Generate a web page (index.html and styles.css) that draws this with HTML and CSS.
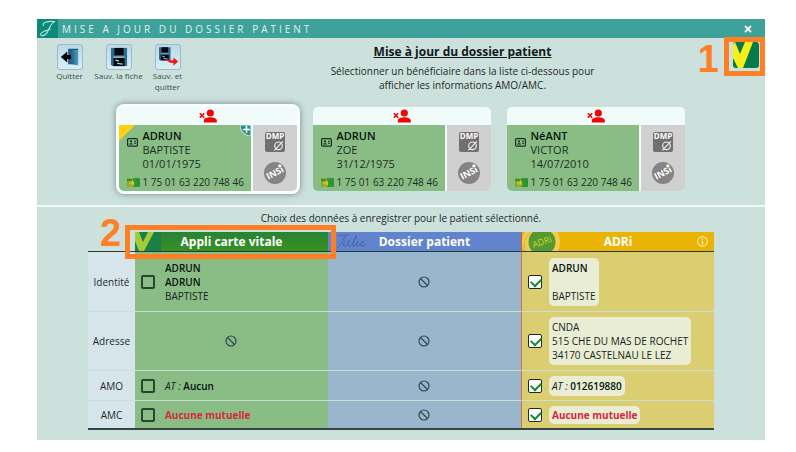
FILE: index.html
```html
<!DOCTYPE html>
<html lang="fr">
<head>
<meta charset="utf-8">
<meta name="viewport" content="width=device-width, initial-scale=1">
<title>Mise à jour du dossier patient</title>
<link rel="stylesheet" href="styles.css">
</head>
<body>
<svg class="defs" aria-hidden="true">
  <defs>
    <linearGradient id="door" x1="0" y1="0" x2="1" y2="0"><stop offset="0" stop-color="#1d5f80"/><stop offset="1" stop-color="#4f9fc4"/></linearGradient>
    <linearGradient id="vitale" x1="0" y1="0" x2="1" y2="0"><stop offset="0" stop-color="#6fa82c"/><stop offset=".45" stop-color="#a9b52a"/><stop offset=".5" stop-color="#2f9c34"/><stop offset="1" stop-color="#2c8f38"/></linearGradient>
    <symbol id="i-remove" viewBox="0 0 18 14">
      <circle cx="11.300" cy="4" r="3.600"/><path d="M4.800 13.500v-2c0-2.200 3.600-3.200 6.500-3.200s6.500 1 6.500 3.200v2z"/>
      <path d="M.8 4.200l4.400 4.600M5.200 4.200L.8 8.800" stroke="#f00505" stroke-width="1.600" fill="none"/>
    </symbol>
    <symbol id="i-id" viewBox="0 0 11 9">
      <rect x=".6" y=".6" width="9.800" height="7.600" rx="1" fill="none" stroke="#16301f" stroke-width="1.200"/>
      <circle cx="4" cy="3.400" r="1.100"/><path d="M2 6.600c0-1.800 4-1.800 4 0zM7 2.700h2v1H7zM7 4.800h2v1H7z"/>
    </symbol>
    <symbol id="i-card" viewBox="0 0 13 9">
      <rect width="13" height="9" rx="1" fill="url(#vitale)"/>
      <path d="M0 1h6v2H0z" fill="#3f8e2d"/><path d="M2 4h3v2.500H2z" fill="#c9b52e"/><path d="M5.500 1l1.500 4v3l-2-3z" fill="#e5c936"/>
    </symbol>
    <symbol id="i-dmp" viewBox="0 0 20 20">
      <rect width="20" height="20" rx="2" fill="#716f70"/>
      <text x="10" y="7" class="dmp-text">DMP</text>
      <circle cx="13.500" cy="13.800" r="3.800" fill="none" stroke="#eee" stroke-width="1.200"/><path d="M9.300 18.300l8.600-9" stroke="#eee" stroke-width="1.200"/>
    </symbol>
    <symbol id="i-insi" viewBox="0 0 22 22">
      <circle cx="11" cy="11" r="11" fill="#858484"/>
      <text x="11" y="14" transform="rotate(-27 11 11)" class="insi-text">INSi</text>
      <circle cx="15.800" cy="3.800" r="1.500" fill="#fff"/>
    </symbol>
    <symbol id="i-none" viewBox="0 0 12 12">
      <circle cx="6" cy="6" r="5" fill="none" stroke="currentColor" stroke-width="1.200"/><path d="M2.500 2.500l7 7" stroke="currentColor" stroke-width="1.200"/>
    </symbol>
    <symbol id="i-floppy" viewBox="0 0 18 20">
      <path d="M0 0h18v20H2l-2-2z" fill="#2b6d90"/><path d="M4 0h10v8H4z" fill="#05080b"/>
      <path d="M3 11h12v9H3z" fill="#05080b"/><path d="M5 13.500l4 1M7 17l6 .8" stroke="#b8cfdb" stroke-width="1.400"/><path d="M3 9.500h12v1.200H3z" fill="#a9c8d8"/>
    </symbol>
  </defs>
</svg>

<main class="window">
  <header class="titlebar">
    <svg class="brand" viewBox="0 0 21 19" aria-hidden="true"><path d="M6.500 7C5 3.500 9 2 18 2.500C14 4 12.500 8 11 12 9.500 16.500 4 18 3.500 15.500c-.5-2.500 6-4 10-5.500" fill="none" stroke="#b7e4dd" stroke-width="1.100"/></svg>
    <span class="window-title">MISE A JOUR DU DOSSIER PATIENT</span>
    <button class="close" type="button" aria-label="Fermer"><svg viewBox="0 0 8 8"><path d="M1 1l6 6M7 1L1 7" stroke="#fff" stroke-width="1.800"/></svg></button>
  </header>

  <section class="top">
    <nav class="tools">
      <button class="tool" type="button">
        <span class="tool-icon"><svg viewBox="0 0 24 24"><path d="M10 3h11v2l-8 0v15h-3z" fill="#1d5878"/><path d="M13 4l8 1v16l-8-1z" fill="url(#door)"/><path d="M2 12l7-6v3.700h4v4.600H9V18z" fill="#000"/></svg></span>
        <span class="tool-label">Quitter</span>
      </button>
      <button class="tool" type="button">
        <span class="tool-icon"><svg viewBox="0 0 24 24"><use href="#i-floppy" x="3" y="2" width="18" height="20"/></svg></span>
        <span class="tool-label">Sauv. la fiche</span>
      </button>
      <button class="tool" type="button">
        <span class="tool-icon"><svg viewBox="0 0 24 24"><use href="#i-floppy" x="2" y="1" width="13" height="15"/><path d="M10 13c1 4 4 5.500 8 5.500V21.500l5-4.500-5-4.500v3c-4 0-6-.5-8-2.500z" fill="#f01818"/></svg></span>
        <span class="tool-label">Sauv. et<br>quitter</span>
      </button>
    </nav>
    <div class="intro">
      <h1>Mise à jour du dossier patient</h1>
      <p>Sélectionner un bénéficiaire dans la liste ci-dessous pour<br>afficher les informations AMO/AMC.</p>
    </div>
    <div class="vitale-slot">
      <button class="vitale" type="button" aria-label="Appli carte vitale"><svg viewBox="0 0 26 26"><path d="M0 2l2-2 5 12 5-12h8L10 26H5L0 16z"/></svg></button>
      <span class="frame frame-one"></span>
      <span class="step step-one">1</span>
    </div>
  </section>

  <section class="cards">
    <article class="card selected">
      <div class="card-head"><svg><use href="#i-remove"/></svg></div>
      <div class="card-body">
        <div class="person">
          <span class="corner"></span>
          <svg class="plus" viewBox="0 0 11 11"><path d="M0 0h11v11C5 11 0 6 0 0z" fill="#2b8d88" stroke="#d8efe6"/><path d="M6.500 1v7M3 4.500h7" stroke="#fff" stroke-width="1.600"/></svg>
          <svg class="id"><use href="#i-id"/></svg><div class="lines"><strong>ADRUN</strong><span>BAPTISTE</span><span>01/01/1975</span></div>
          <svg class="vcard"><use href="#i-card"/></svg><span class="nir">1 75 01 63 220 748 46</span>
        </div>
        <div class="badges"><svg class="dmp"><use href="#i-dmp"/></svg><svg class="insi"><use href="#i-insi"/></svg></div>
      </div>
    </article>
    <article class="card">
      <div class="card-head"><svg><use href="#i-remove"/></svg></div>
      <div class="card-body">
        <div class="person">
          <svg class="id"><use href="#i-id"/></svg><div class="lines"><strong>ADRUN</strong><span>ZOE</span><span>31/12/1975</span></div>
          <svg class="vcard"><use href="#i-card"/></svg><span class="nir">1 75 01 63 220 748 46</span>
        </div>
        <div class="badges"><svg class="dmp"><use href="#i-dmp"/></svg><svg class="insi"><use href="#i-insi"/></svg></div>
      </div>
    </article>
    <article class="card">
      <div class="card-head"><svg><use href="#i-remove"/></svg></div>
      <div class="card-body">
        <div class="person">
          <svg class="id"><use href="#i-id"/></svg><div class="lines"><strong>NéANT</strong><span>VICTOR</span><span>14/07/2010</span></div>
          <svg class="vcard"><use href="#i-card"/></svg><span class="nir">1 75 01 63 220 748 46</span>
        </div>
        <div class="badges"><svg class="dmp"><use href="#i-dmp"/></svg><svg class="insi"><use href="#i-insi"/></svg></div>
      </div>
    </article>
  </section>

  <section class="choice">
    <h2>Choix des données à enregistrer pour le patient sélectionné.</h2>
    <table>
      <colgroup><col class="col-label"><col><col><col></colgroup>
      <thead>
        <tr>
          <td></td>
          <th scope="col" class="h-vitale"><div class="head"><svg class="mark" viewBox="0 0 26 19"><path d="M0 0h26v19H0z" fill="#1b8044"/><path d="M0 0h4l4 10 5-10h6L9 19H4L0 9z" fill="#a5cb3a"/></svg>Appli carte vitale<span class="frame frame-two"></span><span class="step step-two">2</span></div></th>
          <th scope="col" class="h-dossier"><div class="head"><svg class="mark julie" viewBox="0 0 36 19"><g fill="none" stroke="#4060a6" stroke-width="1"><path d="M3 3c4-2 8-1 12-1M11 2C9 7 6 14 1 18M11 8c-2 4-3 8 0 7s4-4 5-7c-2 5-2 8 1 7 4-2 8-12 8-13-3 2-6 11-4 13 3 0 5-5 5-6-1 3-2 6 0 6 2-1 3-3 4-4 3-3 4-1 2 0-3 1-3 5 0 4l4-2"/></g></svg>Dossier patient</div></th>
          <th scope="col" class="h-adri"><div class="head"><svg class="mark seal" viewBox="0 0 40 19"><circle cx="19" cy="10" r="19" fill="#f0cc52"/><path d="M3 18C1 11 3 5 8 0" fill="none" stroke="#c59b16" stroke-dasharray="1 1"/><circle cx="20" cy="10" r="13.500" fill="#55992f"/><text x="20" y="13" transform="rotate(-18 20 10)" class="adri-text">ADRi</text></svg>ADRi<svg class="info" viewBox="0 0 11 11"><circle cx="5.500" cy="5.500" r="4.800" fill="none" stroke="#fff5d0"/><path d="M5.500 4.800V8.500M5.500 2.500v1.200" stroke="#fff5d0" stroke-width="1.300"/></svg></div></th>
        </tr>
      </thead>
      <tbody>
        <tr class="tall">
          <th scope="row">Identité</th>
          <td class="c-vitale"><label><input type="checkbox"><span class="value"><b>ADRUN</b><br><b>ADRUN</b><br>BAPTISTE</span></label></td>
          <td class="c-dossier"><svg class="none"><use href="#i-none"/></svg></td>
          <td class="c-adri"><label><input type="checkbox" checked><span class="value"><b>ADRUN</b><br><br>BAPTISTE</span></label></td>
        </tr>
        <tr class="tall">
          <th scope="row">Adresse</th>
          <td class="c-vitale"><svg class="none"><use href="#i-none"/></svg></td>
          <td class="c-dossier"><svg class="none"><use href="#i-none"/></svg></td>
          <td class="c-adri"><label><input type="checkbox" checked><span class="value">CNDA<br>515 CHE DU MAS DE ROCHET<br>34170 CASTELNAU LE LEZ</span></label></td>
        </tr>
        <tr class="medium">
          <th scope="row">AMO</th>
          <td class="c-vitale"><label><input type="checkbox"><span class="value"><i>AT :</i> <b>Aucun</b></span></label></td>
          <td class="c-dossier"><svg class="none"><use href="#i-none"/></svg></td>
          <td class="c-adri"><label><input type="checkbox" checked><span class="value"><i>AT :</i> <b>012619880</b></span></label></td>
        </tr>
        <tr class="short">
          <th scope="row">AMC</th>
          <td class="c-vitale"><label><input type="checkbox"><span class="value alert">Aucune mutuelle</span></label></td>
          <td class="c-dossier"><svg class="none"><use href="#i-none"/></svg></td>
          <td class="c-adri"><label><input type="checkbox" checked><span class="value alert">Aucune mutuelle</span></label></td>
        </tr>
      </tbody>
    </table>
  </section>
</main>
</body>
</html>
```
FILE: styles.css
```css
* { box-sizing: border-box; }

body {
  margin: 0;
  padding: 19px 31px 12px 37px;
  background: #fff;
  color: #1c2b2a;
  font: 11px/14px "Open Sans", "Noto Sans", sans-serif;
}

button {
  margin: 0;
  padding: 0;
  border: 0;
  background: none;
  color: inherit;
  font: inherit;
}

svg { display: block; }
.defs { position: absolute; width: 0; height: 0; }

.window { background: #cce0dc; }

/* Title bar */
.titlebar {
  display: flex;
  align-items: center;
  height: 19px;
  background: #3fa29a;
  color: #def3ef;
}
.brand { width: 21px; height: 19px; background: #0c897b; }
.window-title {
  flex: 1;
  margin-left: 4px;
  font-size: 10px;
  letter-spacing: 3px;
  white-space: nowrap;
}
.close { padding: 5px 13px; }
.close svg { width: 8px; height: 8px; }

/* Toolbar and introduction */
.top { display: flex; padding: 4px 5px 13px 8px; }
.tools { display: flex; padding-top: 2px; }
.tool {
  display: flex;
  flex-direction: column;
  align-items: center;
  width: 49px;
  font-size: 8px;
  line-height: 11px;
  color: #35504f;
}
.tool-label { white-space: nowrap; }
.tool-icon {
  width: 26px;
  height: 26px;
  padding: 1px;
  border: 1px solid #9fb9c6;
  border-radius: 3px;
  background: linear-gradient(#bcd9e8, #d9edf5);
}
.tool-icon svg { width: 22px; height: 22px; }

.intro { flex: 1; padding-top: 1px; text-align: center; }
h1 {
  margin: 0 0 3px;
  font-size: 12px;
  line-height: 18px;
  font-weight: 700;
  color: #101a1a;
  text-decoration: underline;
}
.intro p { margin: 0; font-size: 10px; white-space: nowrap; }

.vitale-slot { position: relative; width: 27px; }
.vitale {
  display: block;
  width: 26px;
  height: 26px;
  border-radius: 3px;
  background: #067a48;
  overflow: hidden;
}
.vitale svg { width: 26px; height: 26px; fill: #f4f01c; }

/* Orange step markers */
.frame { position: absolute; z-index: 2; border: 5px solid #ff7f27; pointer-events: none; }
.frame-one { top: -5px; right: -5px; width: 41px; height: 39px; }
.frame-two { top: -7px; bottom: -8px; left: -10px; right: -8px; }
.step {
  position: absolute;
  z-index: 2;
  color: #ff7f27;
  font: bold 38px/38px "Liberation Sans", Arial, sans-serif;
}
.step-one { top: -2px; right: 41px; }
.step-two { top: -18px; left: -35px; }

/* Beneficiary cards */
.cards {
  display: flex;
  justify-content: center;
  gap: 16px;
  padding: 2px 0 14px 1px;
  border-bottom: 2px solid #f0f9f7;
}
.card { flex: 0 1 178px; border-radius: 5px; overflow: hidden; background: #f0fbfa; }
.card.selected { box-shadow: 0 0 0 3px #fafefe, 0 0 6px 3px #6f8b86; }
.card-head { display: flex; justify-content: center; height: 18px; padding-top: 2px; }
.card-head svg { width: 18px; height: 14px; fill: #f00505; }
.card-body { display: flex; gap: 2px; height: 66px; }
.person {
  position: relative;
  flex: 1;
  display: grid;
  grid-template-columns: 16px 1fr;
  align-content: start;
  row-gap: 4px;
  padding: 4px 0 0 8px;
  background: #8abd86;
  color: #18301f;
}
.lines { display: flex; flex-direction: column; }
.lines strong { font-weight: 600; color: #07140b; }
.id { width: 11px; height: 9px; margin-top: 9px; fill: #16301f; }
.vcard { width: 13px; height: 9px; margin-top: 3px; }
.nir { font-size: 10px; white-space: nowrap; }
.corner {
  position: absolute;
  top: 0;
  left: 0;
  border-top: 16px solid #ffd012;
  border-right: 16px solid transparent;
}
.plus { position: absolute; top: 0; right: 0; width: 11px; height: 11px; }
.badges {
  display: flex;
  flex-direction: column;
  align-items: center;
  gap: 10px;
  width: 44px;
  padding-top: 7px;
  background: #d0d0d1;
}
.dmp { width: 20px; height: 20px; }
.insi { width: 22px; height: 22px; }
.dmp-text { font: bold 8px "Open Sans", sans-serif; fill: #fff; text-anchor: middle; }
.insi-text { font: bold 9px "Open Sans", sans-serif; fill: #fff; text-anchor: middle; }
.adri-text { font: 9px "Open Sans", sans-serif; fill: #c9d63a; text-anchor: middle; }

/* Choice table */
.choice { padding: 4px 0 10px; }
h2 {
  margin: 0 0 7px;
  font-size: 10px;
  line-height: 14px;
  font-weight: 400;
  text-align: center;
}
table {
  width: 86%;
  margin: 0 auto;
  border-spacing: 0;
  table-layout: fixed;
  border-bottom: 2px solid #354744;
}
.col-label { width: 47px; }
td, th { padding: 0; }
thead td, thead th { border-bottom: 1px solid #263b3a; }
.head {
  position: relative;
  display: flex;
  align-items: center;
  justify-content: center;
  height: 19px;
  color: #fff;
  font-size: 12px;
  font-weight: 700;
}
.mark { position: absolute; left: 0; top: 0; width: 26px; height: 19px; }
.julie { left: 8px; width: 30px; }
.seal { width: 40px; }
.info { position: absolute; right: 6px; top: 4px; width: 11px; height: 11px; }
.h-vitale { background: linear-gradient(#288337, #38911f); }
.h-dossier { background: #6284cc; }
.h-adri { background: #e9b404; border-left: 1px solid #d65c4c; }

tbody th {
  background: #d6e5ea;
  font-size: 10px;
  font-weight: 400;
}
tbody tr + tr > * { border-top: 1px solid #c9ded6; }
.tall { height: 59px; }
.medium { height: 30px; }
.short { height: 28px; }
.c-vitale { background: #8abd86; }
.c-dossier { background: #98b6cc; }
.c-adri { background: #dace70; border-left: 1px solid #e06a55; }
.none { width: 12px; height: 12px; margin: 0 auto; color: #2f4b55; }
.c-vitale label, .c-adri label { display: flex; align-items: center; gap: 7px; padding-left: 6px; }
input[type="checkbox"] {
  appearance: none;
  flex: none;
  width: 14px;
  height: 14px;
  margin: 0;
  border: 2px solid #2b4531;
  border-radius: 2px;
}
input[type="checkbox"]:checked {
  position: relative;
  border-width: 1px;
  border-color: #1e2b22;
  background: #fff;
}
input[type="checkbox"]:checked::after {
  content: "";
  position: absolute;
  top: 2px;
  left: 2px;
  width: 8px;
  height: 5px;
  border: solid #158a2c;
  border-width: 0 0 2px 2px;
  transform: rotate(-45deg);
}
.value { padding: 3px; border-radius: 5px; font-size: 10px; color: #18251c; }
.value b { font-weight: 600; color: #07140b; }
.c-adri .value { background: #e9edd3; }
.value.alert { color: #d8293c; font-weight: 700; }
.short .value { padding: 2px 3px; }
```
